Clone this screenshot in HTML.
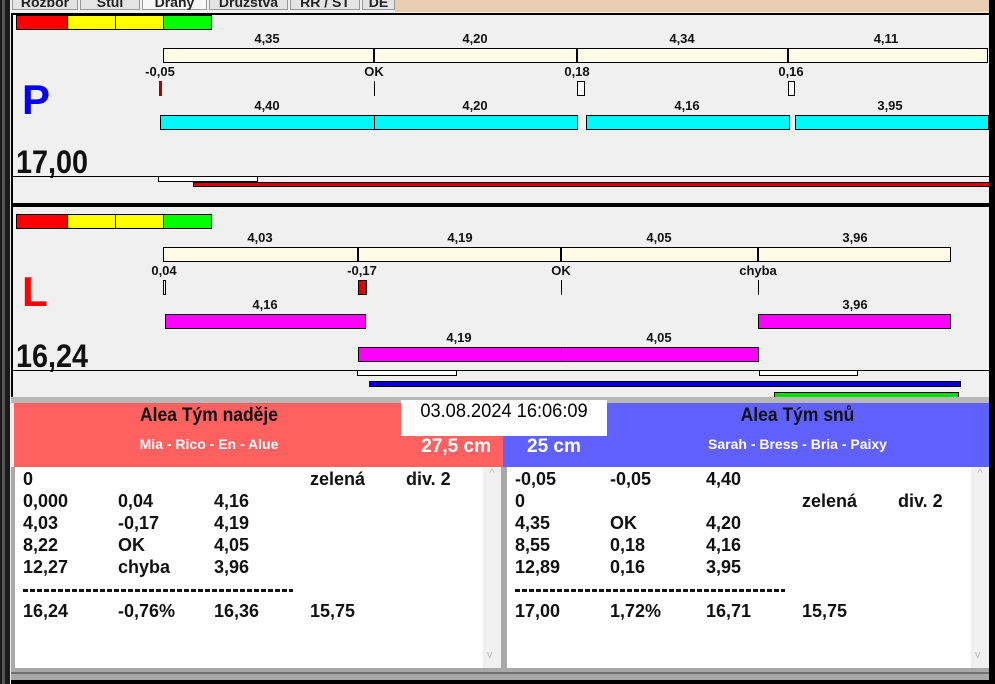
<!DOCTYPE html>
<html><head><meta charset="utf-8"><style>
*{margin:0;padding:0;box-sizing:border-box}
body{width:995px;height:684px;overflow:hidden;background:#f0f0f0;font-family:"Liberation Sans",Arial,sans-serif;position:relative}
div{position:absolute}
.l{font-size:13px;font-weight:bold;color:#111;transform:translateX(-50%);white-space:nowrap;line-height:13px}
.b{border:1px solid #000}
.t{font-size:18px;font-weight:bold;color:#111;line-height:22px;white-space:nowrap}
.tab{top:-6px;height:16px;background:#e4e4e4;border:1px solid #999;font-size:14px;font-weight:bold;color:#222;text-align:center;line-height:14px}
.d{height:3px;background:repeating-linear-gradient(90deg,#111 0 5px,transparent 5px 7px)}
</style></head><body>
<div style="left:0;top:0;width:10px;height:684px;background:#1a1a1a"></div>
<div style="left:2px;top:0;width:3px;height:684px;background:#555"></div>
<div style="left:395px;top:0;width:594px;height:12px;background:#e9cdb0"></div>
<div class="tab" style="left:12px;width:66px">Rozbor</div>
<div class="tab" style="left:80px;width:60px">Stůl</div>
<div class="tab" style="left:142px;width:65px;background:#f6f6f6">Dráhy</div>
<div class="tab" style="left:209px;width:79px">Družstva</div>
<div class="tab" style="left:290px;width:70px">RR / ST</div>
<div class="tab" style="left:362px;width:33px">DE</div>
<div style="left:989px;top:0;width:6px;height:684px;background:#000"></div>
<div style="left:11px;top:13px;width:2px;height:390px;background:#000"></div>
<div style="left:11px;top:13px;width:978px;height:2px;background:#000"></div>

<!-- PANEL 1 -->
<div class="b" style="left:16px;top:15px;width:52px;height:15px;background:#f00"></div>
<div class="b" style="left:67px;top:15px;width:49px;height:15px;background:#ff0"></div>
<div class="b" style="left:115px;top:15px;width:49px;height:15px;background:#ff0"></div>
<div class="b" style="left:163px;top:15px;width:49px;height:15px;background:#0f0"></div>
<div class="l" style="left:267px;top:32px">4,35</div>
<div class="l" style="left:475px;top:32px">4,20</div>
<div class="l" style="left:682px;top:32px">4,34</div>
<div class="l" style="left:886px;top:32px">4,11</div>
<div class="b" style="left:163px;top:48px;width:825px;height:15px;background:#fffbe6"></div>
<div style="left:373px;top:48px;width:2px;height:15px;background:#000"></div>
<div style="left:576px;top:48px;width:2px;height:15px;background:#000"></div>
<div style="left:787px;top:48px;width:2px;height:15px;background:#000"></div>
<div class="l" style="left:160px;top:65px">-0,05</div>
<div class="l" style="left:374px;top:65px">OK</div>
<div class="l" style="left:577px;top:65px">0,18</div>
<div class="l" style="left:791px;top:65px">0,16</div>
<div style="left:159px;top:81px;width:3px;height:15px;background:#b00000"></div>
<div style="left:374px;top:81px;width:1px;height:15px;background:#000"></div>
<div class="b" style="left:577px;top:81px;width:8px;height:15px;background:#fff"></div>
<div class="b" style="left:788px;top:81px;width:7px;height:15px;background:#fff"></div>
<div style="left:22px;top:76px;font-size:42px;font-weight:bold;color:#0000ff">P</div>
<div class="l" style="left:267px;top:99px">4,40</div>
<div class="l" style="left:475px;top:99px">4,20</div>
<div class="l" style="left:687px;top:99px">4,16</div>
<div class="l" style="left:890px;top:99px">3,95</div>
<div class="b" style="left:160px;top:115px;width:418px;height:15px;background:#00f8f8"></div>
<div style="left:374px;top:115px;width:1px;height:15px;background:#000"></div>
<div class="b" style="left:586px;top:115px;width:204px;height:15px;background:#00f8f8"></div>
<div class="b" style="left:795px;top:115px;width:194px;height:15px;background:#00f8f8"></div>
<div style="left:16px;top:144px;font-size:32px;font-weight:bold;color:#111;transform:scaleX(0.9);transform-origin:0 0">17,00</div>
<div style="left:12px;top:176px;width:977px;height:1px;background:#000"></div>
<div style="left:12px;top:176px;width:1px;height:5px;background:#000"></div>
<div class="b" style="left:158px;top:176px;width:100px;height:6px;background:#fff"></div>
<div class="b" style="left:193px;top:182px;width:797px;height:5px;background:#e00000"></div>
<div style="left:11px;top:203px;width:978px;height:4px;background:#000"></div>

<!-- PANEL 2 -->
<div class="b" style="left:16px;top:214px;width:52px;height:15px;background:#f00"></div>
<div class="b" style="left:67px;top:214px;width:49px;height:15px;background:#ff0"></div>
<div class="b" style="left:115px;top:214px;width:49px;height:15px;background:#ff0"></div>
<div class="b" style="left:163px;top:214px;width:49px;height:15px;background:#0f0"></div>
<div class="l" style="left:260px;top:231px">4,03</div>
<div class="l" style="left:460px;top:231px">4,19</div>
<div class="l" style="left:659px;top:231px">4,05</div>
<div class="l" style="left:855px;top:231px">3,96</div>
<div class="b" style="left:163px;top:247px;width:788px;height:15px;background:#fffbe6"></div>
<div style="left:357px;top:247px;width:2px;height:15px;background:#000"></div>
<div style="left:560px;top:247px;width:2px;height:15px;background:#000"></div>
<div style="left:757px;top:247px;width:2px;height:15px;background:#000"></div>
<div class="l" style="left:164px;top:264px">0,04</div>
<div class="l" style="left:362px;top:264px">-0,17</div>
<div class="l" style="left:561px;top:264px">OK</div>
<div class="l" style="left:758px;top:264px">chyba</div>
<div class="b" style="left:163px;top:280px;width:3px;height:15px;background:#fff"></div>
<div class="b" style="left:358px;top:280px;width:9px;height:15px;background:#e00000"></div>
<div style="left:561px;top:280px;width:1px;height:15px;background:#000"></div>
<div style="left:758px;top:280px;width:1px;height:15px;background:#000"></div>
<div style="left:22px;top:268px;font-size:42px;font-weight:bold;color:#f00">L</div>
<div class="l" style="left:265px;top:298px">4,16</div>
<div class="l" style="left:855px;top:298px">3,96</div>
<div class="b" style="left:165px;top:314px;width:201px;height:15px;background:#f0f"></div>
<div class="b" style="left:758px;top:314px;width:193px;height:15px;background:#f0f"></div>
<div class="l" style="left:459px;top:331px">4,19</div>
<div class="l" style="left:659px;top:331px">4,05</div>
<div class="b" style="left:358px;top:347px;width:401px;height:15px;background:#f0f"></div>
<div style="left:561px;top:347px;width:1px;height:15px;background:#000"></div>
<div style="left:16px;top:338px;font-size:32px;font-weight:bold;color:#111;transform:scaleX(0.9);transform-origin:0 0">16,24</div>
<div style="left:12px;top:370px;width:977px;height:1px;background:#000"></div>
<div style="left:12px;top:370px;width:1px;height:5px;background:#000"></div>
<div class="b" style="left:357px;top:370px;width:100px;height:6px;background:#fff"></div>
<div class="b" style="left:759px;top:370px;width:99px;height:6px;background:#fff"></div>
<div class="b" style="left:369px;top:381px;width:592px;height:6px;background:#0000d0"></div>
<div class="b" style="left:774px;top:392px;width:185px;height:6px;background:#00e000"></div>
<div style="left:11px;top:397px;width:978px;height:6px;background:#b8b8b8"></div>

<!-- HEADER -->
<div style="left:14px;top:403px;width:489px;height:64px;background:#ff6060"></div>
<div style="left:503px;top:403px;width:486px;height:64px;background:#6060ff"></div>
<div style="left:401px;top:400px;width:206px;height:36px;background:#fff"></div>
<div style="left:401px;top:400px;width:206px;font-size:19px;color:#000;text-align:center;line-height:24px;transform:scaleX(0.96)">03.08.2024 16:06:09</div>
<div style="left:14px;top:405px;width:390px;text-align:center;font-size:19px;font-weight:bold;color:#111;transform:scaleX(0.92)">Alea Tým naděje</div>
<div style="left:14px;top:436px;width:390px;text-align:center;font-size:14px;font-weight:bold;color:#fff">Mia - Rico - En - Alue</div>
<div style="left:400px;top:436px;width:91px;text-align:right;font-size:19px;font-weight:bold;color:#fff">27,5 cm</div>
<div style="left:527px;top:436px;font-size:19px;font-weight:bold;color:#fff">25 cm</div>
<div style="left:606px;top:405px;width:383px;text-align:center;font-size:19px;font-weight:bold;color:#111;transform:scaleX(0.92)">Alea Tým snů</div>
<div style="left:606px;top:436px;width:383px;text-align:center;font-size:14px;font-weight:bold;color:#fff">Sarah - Bress - Bria - Paixy</div>

<!-- LISTS -->
<div style="left:11px;top:467px;width:978px;height:217px;background:#a8a8a8"></div>
<div style="left:15px;top:467px;width:486px;height:201px;background:#fff"></div>
<div style="left:483px;top:467px;width:18px;height:201px;background:#f0f0f0;color:#bbb;font-size:11px;text-align:center">^<br><span style="position:absolute;left:4px;top:182px">v</span></div>
<div style="left:507px;top:467px;width:482px;height:201px;background:#fff"></div>
<div style="left:971px;top:467px;width:18px;height:201px;background:#f0f0f0;color:#bbb;font-size:11px;text-align:center">^<br><span style="position:absolute;left:4px;top:182px">v</span></div>
<div style="left:11px;top:672px;width:978px;height:2px;background:#707070"></div>
<div style="left:11px;top:680px;width:978px;height:4px;background:#000"></div>

<div class="t" style="left:23px;top:468px">0<br>0,000<br>4,03<br>8,22<br>12,27</div>
<div class="t" style="left:118px;top:490px">0,04<br>-0,17<br>OK<br>chyba</div>
<div class="t" style="left:214px;top:490px">4,16<br>4,19<br>4,05<br>3,96</div>
<div class="t" style="left:310px;top:468px">zelená</div>
<div class="t" style="left:406px;top:468px">div. 2</div>
<div class="d" style="left:23px;top:589px;width:270px"></div>
<div class="t" style="left:23px;top:600px">16,24</div>
<div class="t" style="left:118px;top:600px">-0,76%</div>
<div class="t" style="left:214px;top:600px">16,36</div>
<div class="t" style="left:310px;top:600px">15,75</div>

<div class="t" style="left:515px;top:468px">-0,05<br>0<br>4,35<br>8,55<br>12,89</div>
<div class="t" style="left:610px;top:468px">-0,05<br><br>OK<br>0,18<br>0,16</div>
<div class="t" style="left:706px;top:468px">4,40<br><br>4,20<br>4,16<br>3,95</div>
<div class="t" style="left:802px;top:490px">zelená</div>
<div class="t" style="left:898px;top:490px">div. 2</div>
<div class="d" style="left:515px;top:589px;width:270px"></div>
<div class="t" style="left:515px;top:600px">17,00</div>
<div class="t" style="left:610px;top:600px">1,72%</div>
<div class="t" style="left:706px;top:600px">16,71</div>
<div class="t" style="left:802px;top:600px">15,75</div>
</body></html>
